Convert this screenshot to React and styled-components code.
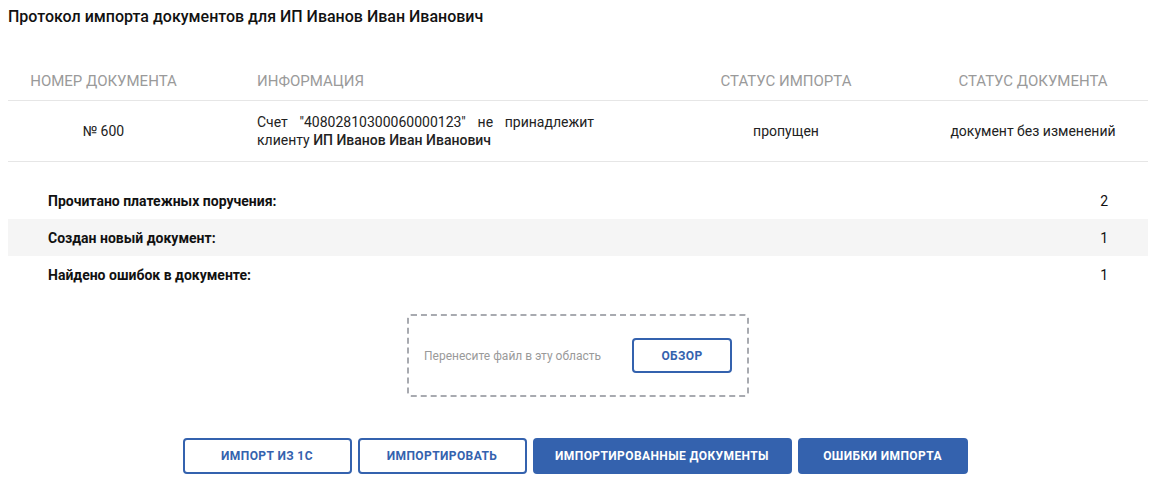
import React from "react";
import styled, { createGlobalStyle } from "styled-components";

const Global = createGlobalStyle`
  html, body { margin: 0; padding: 0; background: #fff; }
  body { font-family: Roboto, "Noto Sans", sans-serif; color: #222; }
  * { box-sizing: border-box; }
`;

const Page = styled.div`
  width: 1156px;
  padding: 0 8px;
`;

const Title = styled.h1`
  margin: 0;
  padding-top: 7px;
  font-size: 16px;
  line-height: 20px;
  font-weight: 500;
  color: #111;
`;

const Grid = styled.div`
  margin-top: 35px;
  display: grid;
  grid-template-columns: 191px 455px 264px 230px;
`;

const HeadCell = styled.div`
  height: 39px;
  border-bottom: 1px solid #e6e6e6;
  display: flex;
  align-items: center;
  justify-content: ${(p) => (p.$left ? "flex-start" : "center")};
  padding-left: ${(p) => (p.$left ? "58px" : "0")};
  font-size: 15px;
  color: #9a9a9a;
  text-transform: uppercase;
`;

const Cell = styled.div`
  height: 61px;
  border-bottom: 1px solid #e6e6e6;
  display: flex;
  align-items: center;
  justify-content: ${(p) => (p.$left ? "flex-start" : "center")};
  padding-left: ${(p) => (p.$left ? "58px" : "0")};
  font-size: 14px;
  color: #222;
`;

const Info = styled.div`
  width: 337px;
  text-align: justify;
  line-height: 18px;
  font-size: 14px;
`;

const Strong = styled.span`
  font-weight: 500;
`;

const Summary = styled.div`
  margin-top: 20px;
`;

const SumRow = styled.div`
  height: 37px;
  display: flex;
  align-items: center;
  justify-content: space-between;
  padding: 0 40px;
  background: ${(p) => (p.$shade ? "#f5f5f5" : "transparent")};
  font-size: 14px;
`;

const SumLabel = styled.span`
  font-weight: 700;
  color: #111;
`;

const SumValue = styled.span`
  color: #111;
`;

const Drop = styled.div`
  margin: 21px auto 0;
  width: 342px;
  height: 83px;
  border: 2px dashed #a8aab0;
  border-radius: 4px;
  display: flex;
  align-items: center;
  justify-content: space-between;
  padding: 0 15px;
`;

const DropText = styled.span`
  font-size: 12px;
  color: #9a9a9a;
`;

const Button = styled.button`
  font-family: Roboto, "Noto Sans", sans-serif;
  height: ${(p) => p.$h || 36}px;
  width: ${(p) => p.$w}px;
  border: 2px solid #3462ae;
  border-radius: 4px;
  background: ${(p) => (p.$filled ? "#3462ae" : "#fff")};
  color: ${(p) => (p.$filled ? "#fff" : "#3462ae")};
  font-size: 12px;
  font-weight: 700;
  text-transform: uppercase;
  cursor: pointer;
  padding: 0;
  letter-spacing: 0.4px;
`;

const Buttons = styled.div`
  margin-top: 41px;
  display: flex;
  justify-content: center;
  gap: 6px;
  padding-right: 6px;
`;

export default function App() {
  return (
    <>
      <Global />
      <Page>
        <Title>Протокол импорта документов для ИП Иванов Иван Иванович</Title>
        <Grid>
          <HeadCell>Номер документа</HeadCell>
          <HeadCell $left>Информация</HeadCell>
          <HeadCell>Статус импорта</HeadCell>
          <HeadCell>Статус документа</HeadCell>
          <Cell>№ 600</Cell>
          <Cell $left>
            <Info>
              Счет "40802810300060000123" не принадлежит клиенту{" "}
              <Strong>ИП Иванов Иван Иванович</Strong>
            </Info>
          </Cell>
          <Cell>пропущен</Cell>
          <Cell>документ без изменений</Cell>
        </Grid>
        <Summary>
          <SumRow>
            <SumLabel>Прочитано платежных поручения:</SumLabel>
            <SumValue>2</SumValue>
          </SumRow>
          <SumRow $shade>
            <SumLabel>Создан новый документ:</SumLabel>
            <SumValue>1</SumValue>
          </SumRow>
          <SumRow>
            <SumLabel>Найдено ошибок в документе:</SumLabel>
            <SumValue>1</SumValue>
          </SumRow>
        </Summary>
        <Drop>
          <DropText>Перенесите файл в эту область</DropText>
          <Button $w={100} $h={35}>Обзор</Button>
        </Drop>
        <Buttons>
          <Button $w={169}>Импорт из 1С</Button>
          <Button $w={169}>Импортировать</Button>
          <Button $w={259} $filled>Импортированные документы</Button>
          <Button $w={170} $filled>Ошибки импорта</Button>
        </Buttons>
      </Page>
    </>
  );
}
